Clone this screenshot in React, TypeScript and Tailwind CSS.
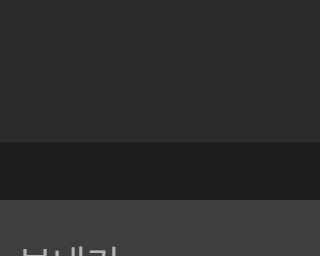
export default function App() {
  return (
    <div className="w-full h-screen overflow-hidden flex flex-col" style={{ fontFamily: '"Noto Sans", "Noto Sans CJK KR", sans-serif' }}>
      <div className="h-[142px] shrink-0 bg-[#2a2b2a] border-b border-[#323332]" />
      <div className="h-[58px] shrink-0 bg-[#1c1d1c] border-b border-[#181918]" />
      <div className="flex-1 bg-[#3e3e3f] pl-[18px] pt-[42px]">
        <div className="text-[37px] leading-[44px] text-[#b4b4b4] whitespace-nowrap">보내기</div>
      </div>
    </div>
  );
}
